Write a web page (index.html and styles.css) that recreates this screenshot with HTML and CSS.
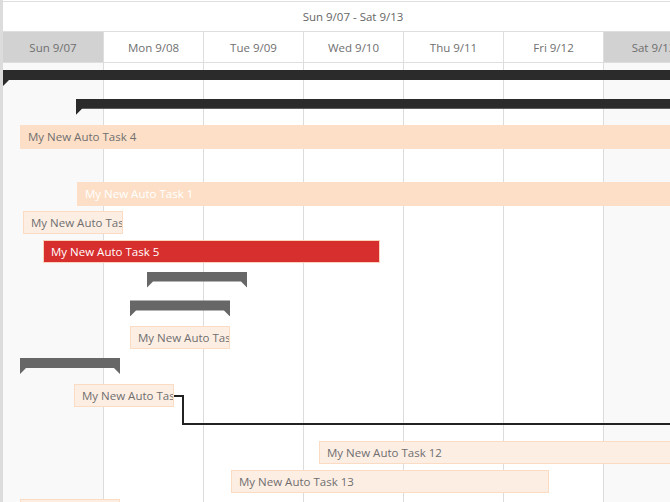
FILE: index.html
```html
<!DOCTYPE html>
<html>
<head>
<meta charset="utf-8">
<link rel="stylesheet" href="styles.css">
</head>
<body>
<div class="gantt">
  <div class="range">Sun 9/07 - Sat 9/13</div>
  <div class="days">
    <div class="day weekend">Sun 9/07</div>
    <div class="day">Mon 9/08</div>
    <div class="day">Tue 9/09</div>
    <div class="day">Wed 9/10</div>
    <div class="day">Thu 9/11</div>
    <div class="day">Fri 9/12</div>
    <div class="day weekend">Sat 9/13</div>
  </div>
  <div class="chart">
    <div class="row"><div class="summary dark" style="margin-left:0;width:700px"></div></div>
    <div class="row"><div class="summary dark" style="margin-left:73px;width:627px"></div></div>
    <div class="row"><div class="task solid" style="margin-left:17px;width:683px">My New Auto Task 4</div></div>
    <div class="row"></div>
    <div class="row"><div class="task solid white-text" style="margin-left:74px;width:626px">My New Auto Task 1</div></div>
    <div class="row"><div class="task light" style="margin-left:20px;width:100px">My New Auto Task 3</div></div>
    <div class="row"><div class="task red" style="margin-left:40px;width:337px">My New Auto Task 5</div></div>
    <div class="row"><div class="summary gray" style="margin-left:144px;width:100px"></div></div>
    <div class="row"><div class="summary gray" style="margin-left:127px;width:100px"></div></div>
    <div class="row"><div class="task light" style="margin-left:127px;width:100px">My New Auto Task 7</div></div>
    <div class="row"><div class="summary gray" style="margin-left:17px;width:100px"></div></div>
    <div class="row"><div class="task light" style="margin-left:71px;width:100px">My New Auto Task 9</div></div>
    <div class="row"></div>
    <div class="row"><div class="task light" style="margin-left:316px;width:384px">My New Auto Task 12</div></div>
    <div class="row"><div class="task light" style="margin-left:228px;width:318px">My New Auto Task 13</div></div>
    <div class="row"><div class="task light" style="margin-left:17px;width:100px">My New Auto Task 14</div></div>
    <svg class="link" width="700" height="440" viewBox="0 0 700 440">
      <path d="M171 333 H180 V361 H700" fill="none" stroke="#222" stroke-width="2"/>
    </svg>
  </div>
</div>
</body>
</html>
```

FILE: styles.css
```css
html, body {
  margin: 0;
  padding: 0;
  overflow: hidden;
  background: #fff;
}

.gantt {
  width: 700px;
  height: 501px;
  padding-top: 1px;
  border-left: 3px solid #dcdcdc;
  overflow: hidden;
  font-family: "Open Sans", "Noto Sans", sans-serif;
  font-size: 11.5px;
  color: #6f6f6f;
}

.range {
  height: 29px;
  border-top: 1px solid #dedede;
  border-bottom: 1px solid #dedede;
  display: flex;
  align-items: center;
  justify-content: center;
  color: #666;
}

.days {
  display: flex;
  height: 30px;
  border-bottom: 1px solid #dedede;
}

.day {
  flex: none;
  width: 100px;
  box-sizing: border-box;
  border-left: 1px solid #dedede;
  display: flex;
  align-items: center;
  justify-content: center;
}

.day:first-child {
  border-left: none;
}

.day.weekend {
  background: #d2d2d2;
}

.chart {
  position: relative;
  padding-top: 4px;
  height: 440px;
  background: linear-gradient(90deg,
    #f9f9f9 0 100px, #dcdcdc 100px 101px,
    #fff 101px 200px, #dcdcdc 200px 201px,
    #fff 201px 300px, #dcdcdc 300px 301px,
    #fff 301px 400px, #dcdcdc 400px 401px,
    #fff 401px 500px, #dcdcdc 500px 501px,
    #fff 501px 600px, #dcdcdc 600px 601px,
    #f9f9f9 601px);
}

.row {
  display: flow-root;
  height: 28.8px;
}

.summary {
  height: 16px;
  margin-top: 3px;
}

.summary.dark {
  background: #2b2b2b;
  clip-path: polygon(0 0, 100% 0, 100% 10px, 6px 10px, 0 16px);
}

.summary.gray {
  background: #676767;
  clip-path: polygon(0 0, 100% 0, 100% 16px, calc(100% - 6px) 10px, 6px 10px, 0 16px);
}

.task {
  box-sizing: border-box;
  height: 24px;
  line-height: 24px;
  padding-left: 8px;
  white-space: nowrap;
  overflow: hidden;
}

.task.solid {
  background: #fddfc7;
}

.task.white-text {
  color: #fff;
}

.task.light {
  height: 23px;
  line-height: 21px;
  padding-left: 7px;
  background: #fdeee4;
  border: 1px solid #fcdbc3;
}

.task.red {
  height: 23px;
  line-height: 21px;
  padding-left: 7px;
  background: #d72e2e;
  border: 1px solid #fbd2ba;
  color: #fff;
}

.link {
  position: absolute;
  left: 0;
  top: 0;
}
```
